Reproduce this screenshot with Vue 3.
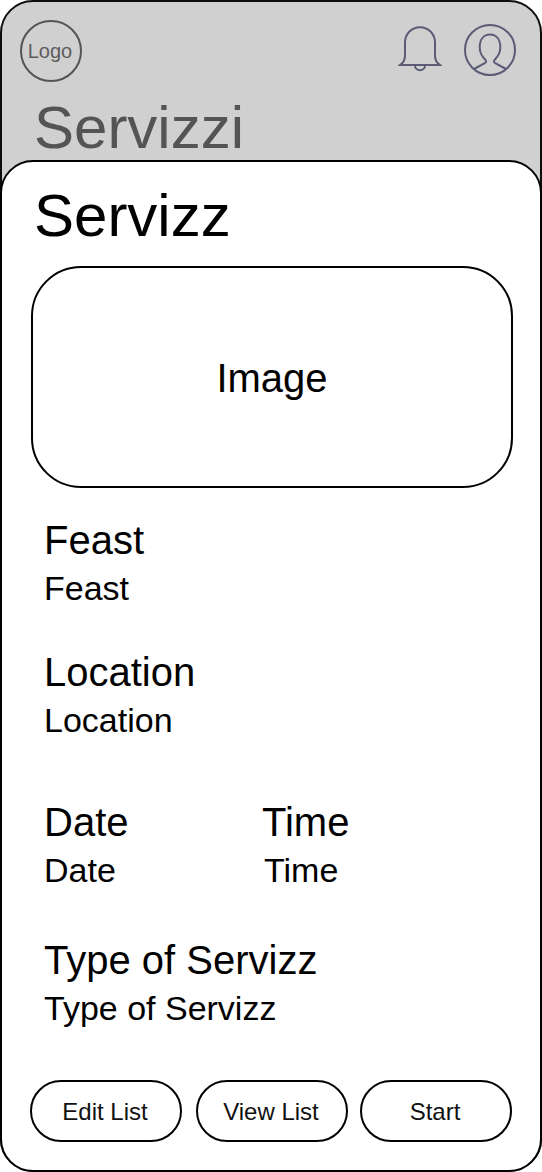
<script setup>
const sections = [
  { key: 'feast', fields: ['Feast'] },
  { key: 'location', fields: ['Location'] },
  { key: 'schedule', fields: ['Date', 'Time'] },
  { key: 'type', fields: ['Type of Servizz'] },
]
const actions = ['Edit List', 'View List', 'Start']
</script>

<template>
  <div class="phone">
    <header class="topbar">
      <div class="logo">Logo</div>
      <div class="icons">
        <svg class="bell" width="44" height="50" viewBox="0 0 44 50">
          <path d="M2 42H42C38 39.500 37 36 37 32.500V19.500C37 10.500 30 4.300 22 4.300S7 10.500 7 19.500V32.500C7 36 6 39.500 2 42Z" />
          <path d="M17 42.500A5 4.800 0 0 0 27 42.500" />
        </svg>
        <svg class="user" width="54" height="54" viewBox="0 0 54 54">
          <circle cx="27" cy="27" r="25" />
          <path d="M11 46L21.800 40.200Q24 38.800 22.300 36.800C18.500 33 16.700 29 16.700 24.500C16.700 16.500 20.500 11.600 27 11.600S37.300 16.500 37.300 24.500C37.300 29 35.500 33 31.700 36.800Q30 38.800 32.200 40.200L43 46" />
        </svg>
      </div>
    </header>
    <h1 class="title muted">Servizzi</h1>
    <main class="sheet">
      <h2 class="title">Servizz</h2>
      <div class="image">Image</div>
      <section v-for="s in sections" :key="s.key" class="row" :class="s.key">
        <div v-for="f in s.fields" :key="f" class="field">
          <div class="label">{{ f }}</div>
          <div class="value">{{ f }}</div>
        </div>
      </section>
      <footer class="actions">
        <button v-for="a in actions" :key="a" type="button">{{ a }}</button>
      </footer>
    </main>
  </div>
</template>

<style>
body {
  margin: 0;
  background: #fff;
}
</style>

<style scoped>
.phone {
  box-sizing: border-box;
  width: 542px;
  height: 1172px;
  border: 2px solid #0d0d0d;
  border-radius: 33px;
  background: #d0d0d0;
  font-family: "Liberation Sans", Arial, sans-serif;
  color: #000;
  display: flex;
  flex-direction: column;
}
.topbar {
  display: flex;
  flex-shrink: 0;
  justify-content: space-between;
  height: 90px;
  padding: 18px 23px 0 18px;
  box-sizing: border-box;
}
.logo {
  box-sizing: border-box;
  width: 62px;
  height: 62px;
  padding-right: 2px;
  border: 2px solid #545454;
  border-radius: 50%;
  color: #5c5c5c;
  font-size: 20px;
  line-height: 58px;
  text-align: center;
}
.icons {
  display: flex;
  gap: 21px;
  padding-top: 3px;
}
.icons svg {
  fill: none;
  stroke: #5b5b75;
  stroke-width: 2;
}
.title {
  margin: 0;
  padding-left: 32px;
  font-size: 60px;
  font-weight: 400;
  line-height: 72px;
}
.muted {
  flex-shrink: 0;
  color: #545454;
  height: 68px;
}
.sheet {
  box-sizing: border-box;
  flex-shrink: 0;
  height: 1012px;
  margin: 0 -2px -2px;
  border: 2px solid #000;
  border-radius: 33px;
  background: #fff;
  padding-top: 18px;
}
.image {
  box-sizing: border-box;
  width: 482px;
  height: 222px;
  margin: 14px 0 28px 29px;
  border: 2px solid #000;
  border-radius: 50px;
  font-size: 40px;
  line-height: 220px;
  text-align: center;
}
.row {
  display: flex;
  padding-left: 42px;
  margin-bottom: 40px;
}
.location {
  margin-bottom: 58px;
}
.schedule {
  margin-bottom: 46px;
}
.schedule .field:first-child {
  width: 218px;
}
.schedule .field + .field .value {
  padding-left: 2px;
}
.label {
  font-size: 40px;
  line-height: 48px;
  margin-bottom: 4px;
}
.value {
  font-size: 34px;
  line-height: 40px;
}
.type {
  margin-bottom: 52px;
}
.actions {
  display: flex;
  padding-left: 28px;
}
.actions button {
  box-sizing: border-box;
  width: 152px;
  height: 62px;
  margin: 0 14px 0 0;
  padding: 2px 2px 0 0;
  border: 2px solid #000;
  border-radius: 31px;
  background: #fff;
  color: #111;
  font: 24px "Liberation Sans", Arial, sans-serif;
}
.actions button:nth-child(2) {
  margin-right: 12px;
}
</style>
